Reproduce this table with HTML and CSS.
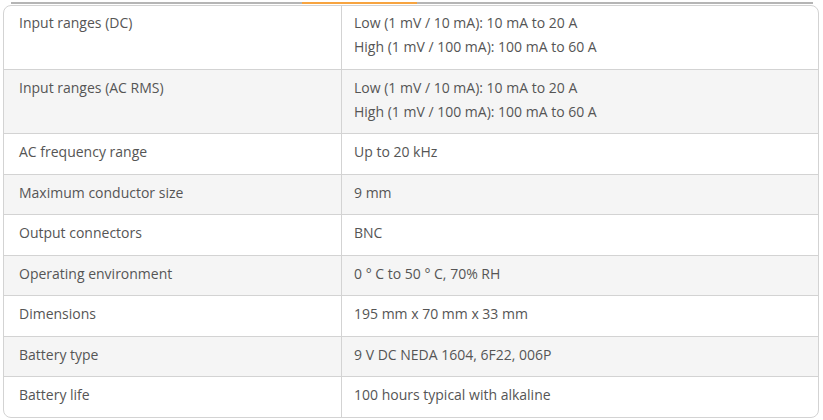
FILE: index.html
```html
<!DOCTYPE html>
<html>
<head>
<meta charset="utf-8">
<link rel="stylesheet" href="styles.css">
</head>
<body>
<div class="tabs-line"><span class="tab-active"></span></div>
<div class="spec-box">
  <table class="spec">
    <tr><td class="k">Input ranges (DC)</td><td class="v">Low (1 mV / 10 mA): 10 mA to 20 A<br>High (1 mV / 100 mA): 100 mA to 60 A</td></tr>
    <tr class="alt"><td class="k">Input ranges (AC RMS)</td><td class="v">Low (1 mV / 10 mA): 10 mA to 20 A<br>High (1 mV / 100 mA): 100 mA to 60 A</td></tr>
    <tr><td class="k">AC frequency range</td><td class="v">Up to 20 kHz</td></tr>
    <tr class="alt"><td class="k">Maximum conductor size</td><td class="v">9 mm</td></tr>
    <tr><td class="k">Output connectors</td><td class="v">BNC</td></tr>
    <tr class="alt"><td class="k">Operating environment</td><td class="v">0 ° C to 50 ° C, 70% RH</td></tr>
    <tr><td class="k">Dimensions</td><td class="v">195 mm x 70 mm x 33 mm</td></tr>
    <tr class="alt"><td class="k">Battery type</td><td class="v">9 V DC NEDA 1604, 6F22, 006P</td></tr>
    <tr><td class="k">Battery life</td><td class="v">100 hours typical with alkaline</td></tr>
  </table>
</div>
</body>
</html>
```
FILE: styles.css
```css
html, body { margin: 0; padding: 0; background: #fff; }
body { font-family: "Open Sans", "Liberation Sans", sans-serif; color: #555; }
.tabs-line {
  margin: 2px 10px 0 11px;
  height: 2px;
  background: #b5b5b5;
  position: relative;
}
.tab-active {
  position: absolute;
  left: 291px;
  width: 115px;
  top: 0;
  height: 2px;
  background: #f7a440;
}
.spec-box {
  margin: 1px 4px 0 3px;
  border: 1px solid #d3d3d3;
  border-radius: 8px;
  overflow: hidden;
}
.spec { width: 100%; border-collapse: collapse; font-size: 14px; line-height: 24px; }
.spec td { padding: 6px 15px 9.5px 15px; vertical-align: top; border-top: 1px solid #d3d3d3; }
.spec tr:first-child td { border-top: none; padding-top: 5px; }
.spec td.k { width: 307px; border-right: 1px solid #d3d3d3; }
.spec td.v { padding-left: 12px; }
.spec tr.alt td { background: #f5f5f5; }
```
